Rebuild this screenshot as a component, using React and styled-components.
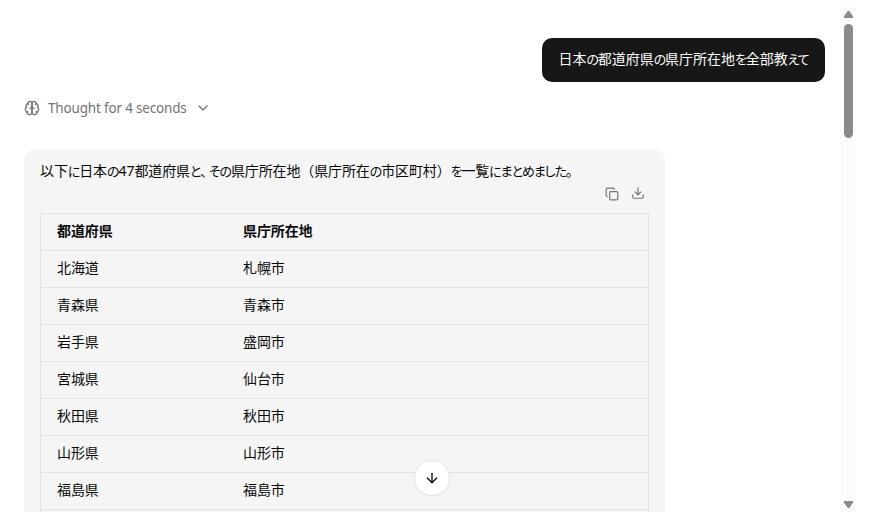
import React from "react";
import styled, { createGlobalStyle } from "styled-components";
import { ArrowDown, ChevronDown, Copy, Download } from "lucide-react";

const prefectures = [
  ["北海道", "札幌市"],
  ["青森県", "青森市"],
  ["岩手県", "盛岡市"],
  ["宮城県", "仙台市"],
  ["秋田県", "秋田市"],
  ["山形県", "山形市"],
  ["福島県", "福島市"],
];

// kana is set narrower than kanji
function Mixed({ text }) {
  return text.split(/([ぁ-ん]+|、|[0-9]+)/).map((part, i) => {
    if (i % 2 === 0) return part;
    if (part === "、") return <Kana key={i} $spacing="2px">{part}</Kana>;
    if (/[0-9]/.test(part)) return <Digits key={i}>{part}</Digits>;
    return <Kana key={i}>{part}</Kana>;
  });
}

function BrainIcon() {
  return (
    <svg
      width="16"
      height="16"
      viewBox="0 0 24 24"
      fill="none"
      stroke="currentColor"
      strokeWidth="2"
      strokeLinecap="round"
      strokeLinejoin="round"
    >
      <path d="M12 5a3 3 0 1 0-5.997.125 4 4 0 0 0-2.526 5.77 4 4 0 0 0 .556 6.588A4 4 0 1 0 12 18Z" />
      <path d="M12 5a3 3 0 1 1 5.997.125 4 4 0 0 1 2.526 5.77 4 4 0 0 1-.556 6.588A4 4 0 1 1 12 18Z" />
      <path d="M15 13a4.5 4.5 0 0 1-3-4 4.5 4.5 0 0 1-3 4" />
      <path d="M17.599 6.5a3 3 0 0 0 .399-1.375" />
      <path d="M6.003 5.125A3 3 0 0 0 6.401 6.5" />
      <path d="M3.477 10.896a4 4 0 0 1 .585-.396" />
      <path d="M19.938 10.5a4 4 0 0 1 .585.396" />
      <path d="M6 18a4 4 0 0 1-1.967-.516" />
      <path d="M19.967 17.484A4 4 0 0 1 18 18" />
    </svg>
  );
}

export default function App() {
  return (
    <>
      <GlobalStyle />
      <Chat>
        <Messages>
          <UserBubble>
            <Mixed text="日本の都道府県の県庁所在地を全部教えて" />
          </UserBubble>
          <Thought>
            <BrainIcon />
            <ThoughtLabel>Thought for 4 seconds</ThoughtLabel>
            <ChevronDown size={16} />
          </Thought>
          <Answer>
            <Intro>
              <Mixed text="以下に日本の47都道府県と、その県庁所在地（県庁所在の市区町村）を一覧にまとめました。" />
            </Intro>
            <Actions>
              <IconButton aria-label="Copy table">
                <Copy size={14} />
              </IconButton>
              <IconButton $raised aria-label="Download table">
                <Download size={14} />
              </IconButton>
            </Actions>
            <Table>
              <Row $head>
                <span>都道府県</span>
                <span>県庁所在地</span>
              </Row>
              {prefectures.map(([name, capital]) => (
                <Row key={name}>
                  <span>{name}</span>
                  <span>{capital}</span>
                </Row>
              ))}
            </Table>
          </Answer>
        </Messages>
        <Scrollbar>
          <Arrow />
          <Thumb />
          <Arrow $down />
        </Scrollbar>
        <ScrollDown aria-label="Scroll to bottom">
          <ArrowDown size={16} />
        </ScrollDown>
      </Chat>
    </>
  );
}

const GlobalStyle = createGlobalStyle`
  body {
    margin: 0;
    background: #fff;
    color: #0a0a0a;
    font-family: "Noto Sans", "Noto Sans CJK JP", sans-serif;
    font-size: 14px;
    overflow: hidden;
  }
  * {
    box-sizing: border-box;
  }
`;

const Chat = styled.div`
  position: relative;
  display: flex;
  width: 856px;
  height: 512px;
  overflow: hidden;
`;

const Messages = styled.div`
  flex: 1;
  display: flex;
  flex-direction: column;
  padding: 38px 16px 0 24px;
`;

const UserBubble = styled.div`
  align-self: flex-end;
  flex-shrink: 0;
  width: 283px;
  height: 44px;
  padding: 0 15px 0 16.5px;
  border-radius: 10px;
  background: #171717;
  color: #fafafa;
  font-family: "Noto Sans CJK JP", sans-serif;
  line-height: 41px;
  letter-spacing: -0.05px;
  white-space: nowrap;
`;

const Kana = styled.span`
  font-size: 13px;
  font-feature-settings: "palt";
  letter-spacing: ${props => props.$spacing || "-1.1px"};
`;

const Digits = styled.span`
  font-family: "Noto Sans", sans-serif;
  letter-spacing: 0;
`;

const Thought = styled.div`
  display: flex;
  flex-shrink: 0;
  align-items: center;
  gap: 8px;
  height: 20px;
  margin-top: 16px;
  color: #737373;
`;

const ThoughtLabel = styled.span`
  width: 139px;
  height: 20px;
  font-size: 13.5px;
  line-height: 20px;
  letter-spacing: -0.18px;
  white-space: nowrap;
`;

const Answer = styled.div`
  flex: 1;
  display: flex;
  flex-direction: column;
  width: 641px;
  margin-top: 32px;
  padding: 10px 16px 0;
  border-radius: 10px 10px 0 0;
  background: #f5f5f5;
  font-family: "Noto Sans CJK JP", sans-serif;
  letter-spacing: -0.12px;
`;

const Intro = styled.div`
  height: 24px;
  line-height: 20px;
  white-space: nowrap;
`;

const Actions = styled.div`
  display: flex;
  justify-content: flex-end;
  height: 29px;
  padding-right: 4px;
  gap: 12px;
`;

const IconButton = styled.button`
  display: flex;
  width: 14px;
  height: 14px;
  margin-top: ${props => (props.$raised ? "2px" : "3px")};
  padding: 0;
  border: 0;
  background: transparent;
  color: #737373;
`;

const Table = styled.div`
  flex: 1;
  border: 1px solid #e3e3e3;
  border-bottom: 0;
`;

const Row = styled.div`
  display: grid;
  grid-template-columns: 186px 1fr;
  height: 37px;
  padding: 0 16px;
  border-bottom: 1px solid #e3e3e3;
  line-height: 32px;
  font-weight: ${props => (props.$head ? 700 : 400)};
`;

const Scrollbar = styled.div`
  display: flex;
  flex-direction: column;
  align-items: center;
  width: 15px;
  margin-top: 6px;
  padding: 5px 0 4px;
  background: #fcfcfc;
`;

const Arrow = styled.span`
  width: 9px;
  height: 7px;
  margin-top: ${props => (props.$down ? "auto" : 0)};
  background: #8b8b8b;
  clip-path: polygon(42% 0, 58% 0, 100% 75%, 100% 100%, 0 100%, 0 75%);
  transform: ${props => (props.$down ? "rotate(180deg)" : "none")};
`;

const Thumb = styled.div`
  width: 9px;
  height: 114px;
  margin-top: 6px;
  border-radius: 5px;
  background: #8b8b8b;
`;

const ScrollDown = styled.button`
  position: absolute;
  left: 414px;
  top: 460px;
  display: flex;
  align-items: center;
  justify-content: center;
  width: 36px;
  height: 36px;
  padding: 0;
  border: 1px solid #e5e5e5;
  border-radius: 50%;
  background: #fff;
  color: #0a0a0a;
  box-shadow: 0 1px 2px rgba(0, 0, 0, 0.05);
`;
